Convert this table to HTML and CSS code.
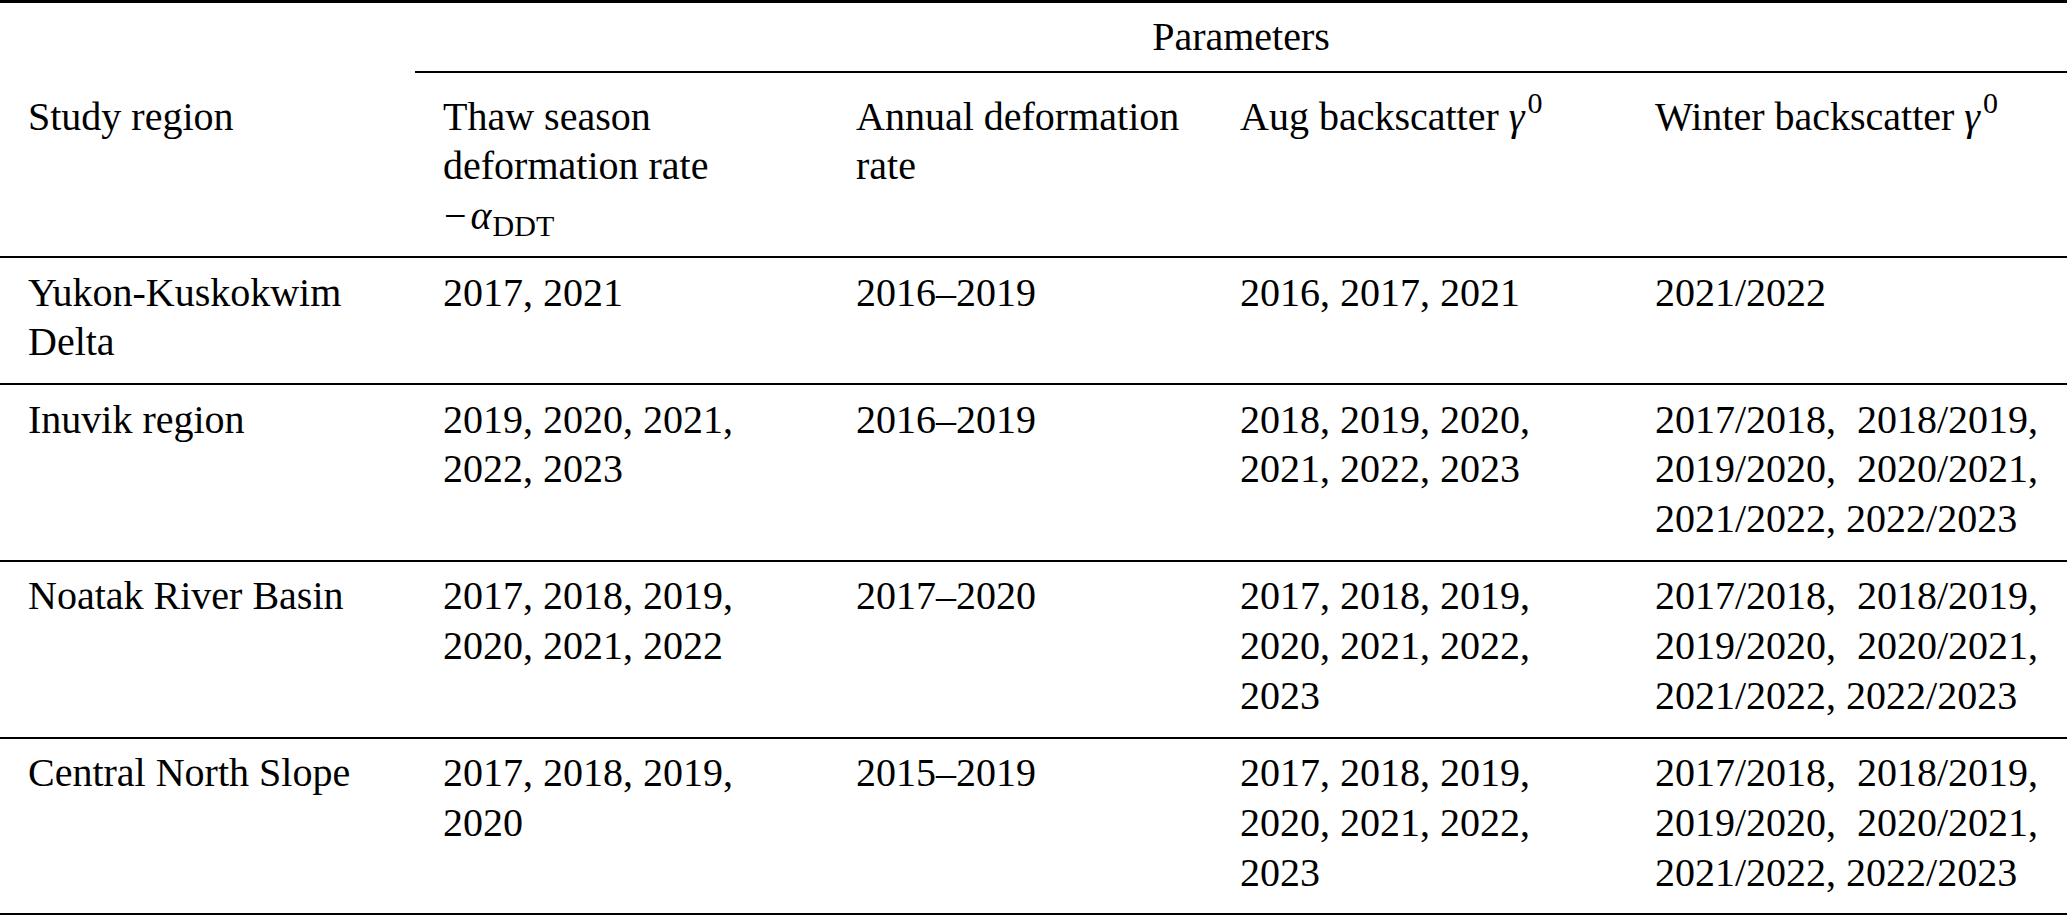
FILE: index.html
```html
<!DOCTYPE html>
<html lang="en">
<head>
<meta charset="utf-8">
<title>Study regions and parameters</title>
<link rel="stylesheet" href="styles.css">
</head>
<body>
<table class="params-table">
  <colgroup>
    <col class="col-region">
    <col class="col-thaw">
    <col class="col-annual">
    <col class="col-aug">
    <col class="col-winter">
  </colgroup>
  <thead>
    <tr class="row-group">
      <th class="cell cell-empty"></th>
      <th class="cell cell-group" colspan="4">Parameters</th>
    </tr>
    <tr class="row-head">
      <th class="cell">Study region</th>
      <th class="cell">Thaw season deformation rate <span class="math"><span class="minus">−</span><i class="var">α</i><sub class="sub">DDT</sub></span></th>
      <th class="cell">Annual deformation rate</th>
      <th class="cell">Aug backscatter <span class="math"><i class="var">γ</i><sup class="sup">0</sup></span></th>
      <th class="cell cell-just">Winter backscatter <span class="math"><i class="var">γ</i><sup class="sup">0</sup></span></th>
    </tr>
  </thead>
  <tbody>
    <tr class="row-body">
      <td class="cell">Yukon-Kuskokwim Delta</td>
      <td class="cell">2017, 2021</td>
      <td class="cell">2016–2019</td>
      <td class="cell">2016, 2017, 2021</td>
      <td class="cell cell-just">2021/2022</td>
    </tr>
    <tr class="row-body">
      <td class="cell">Inuvik region</td>
      <td class="cell">2019, 2020, 2021, 2022, 2023</td>
      <td class="cell">2016–2019</td>
      <td class="cell">2018, 2019, 2020, 2021, 2022, 2023</td>
      <td class="cell cell-just">2017/2018, 2018/2019, 2019/2020, 2020/2021, 2021/2022, 2022/2023</td>
    </tr>
    <tr class="row-body">
      <td class="cell">Noatak River Basin</td>
      <td class="cell">2017, 2018, 2019, 2020, 2021, 2022</td>
      <td class="cell">2017–2020</td>
      <td class="cell">2017, 2018, 2019, 2020, 2021, 2022, 2023</td>
      <td class="cell cell-just">2017/2018, 2018/2019, 2019/2020, 2020/2021, 2021/2022, 2022/2023</td>
    </tr>
    <tr class="row-body">
      <td class="cell">Central North Slope</td>
      <td class="cell">2017, 2018, 2019, 2020</td>
      <td class="cell">2015–2019</td>
      <td class="cell">2017, 2018, 2019, 2020, 2021, 2022, 2023</td>
      <td class="cell cell-just">2017/2018, 2018/2019, 2019/2020, 2020/2021, 2021/2022, 2022/2023</td>
    </tr>
  </tbody>
</table>
</body>
</html>
```

FILE: styles.css
```css
html, body {
  margin: 0;
  padding: 0;
  background: #ffffff;
}

body {
  font-family: "Liberation Serif", "Times New Roman", Times, serif;
  font-size: 40px;
  line-height: 49.8px;
  color: #000000;
}

.params-table {
  width: 2067px;
  table-layout: fixed;
  border-collapse: separate;
  border-spacing: 0;
  font-family: "Liberation Serif", "Times New Roman", Times, serif;
}

.col-region { width: 415px; }
.col-thaw { width: 413px; }
.col-annual { width: 384px; }
.col-aug { width: 415px; }
.col-winter { width: 440px; }

.cell {
  font-family: "Liberation Serif", "Times New Roman", Times, serif;
  font-size: 40px;
  font-weight: normal;
  text-align: left;
  vertical-align: top;
  padding: 0 28px 0 28px;
}

.cell-just {
  text-align: justify;
  padding-right: 29px;
}

/* top rule + "Parameters" spanner */
.row-group .cell {
  border-top: 3px solid #000;
  padding-top: 8.6px;
  padding-bottom: 9.6px;
}

.row-group .cell-group {
  text-align: center;
  padding-left: 0;
  padding-right: 0;
  border-bottom: 2px solid #000;
}

/* column headings */
.row-head .cell {
  padding-top: 18.6px;
  padding-bottom: 15px;
  border-bottom: 2px solid #000;
}

/* data rows */
.row-body .cell {
  padding-top: 9.6px;
  padding-bottom: 15.8px;
  border-bottom: 2px solid #000;
}

.math {
  white-space: nowrap;
}

.minus {
  margin-left: 1px;
  margin-right: 4px;
}

.var {
  font-style: italic;
}

.sub {
  font-size: 30px;
  line-height: 0;
  vertical-align: -7px;
  margin-left: 1px;
}

.sup {
  font-size: 30px;
  line-height: 0;
  vertical-align: 17px;
  margin-left: 3px;
}
```
